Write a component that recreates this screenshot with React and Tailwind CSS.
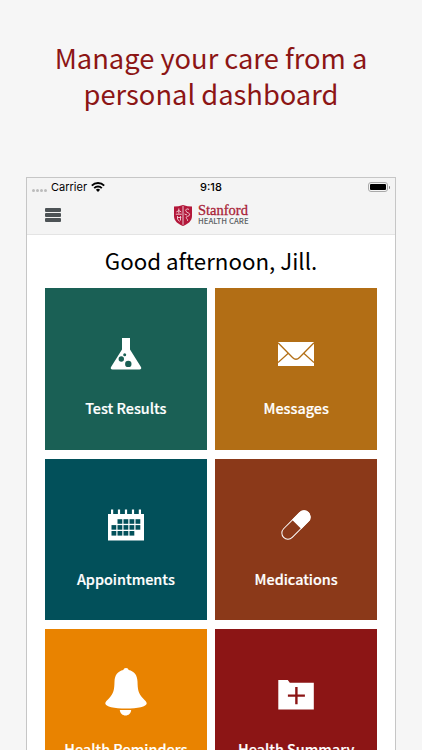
const tiles = [
  { label: 'Test Results', color: 'bg-[#1a6055]', icon: FlaskIcon },
  { label: 'Messages', color: 'bg-[#b26e15]', icon: EnvelopeIcon },
  { label: 'Appointments', color: 'bg-[#02505a]', icon: CalendarIcon },
  { label: 'Medications', color: 'bg-[#8b3919]', icon: PillIcon },
  { label: 'Health Reminders', color: 'bg-[#e98300]', icon: BellIcon },
  { label: 'Health Summary', color: 'bg-[#8c1515]', icon: FolderPlusIcon },
];

// Filled calendar days as [column, row]
const days = [
  [1, 0], [2, 0], [3, 0], [4, 0],
  [0, 1], [1, 1], [2, 1], [3, 1], [4, 1],
  [0, 2], [1, 2], [2, 2], [3, 2],
];

function FlaskIcon() {
  return (
    <svg width="32" height="32" viewBox="0 0 32 32">
      <path
        fill="#fff"
        fillRule="evenodd"
        d="M12 0h8v11.500l10.800 17.300c1 1.600.3 2.700-1.300 2.700h-27C.9 31.500.2 30.400 1.200 28.800L12 11.500ZM14.700 15.200a1.500 1.500 0 1 0 0 3 1.500 1.500 0 0 0 0-3ZM11.300 18.300a2.700 2.700 0 1 0 0 5.400 2.700 2.700 0 0 0 0-5.400ZM18.300 22.700a3.200 3.200 0 1 0 0 6.400 3.200 3.200 0 0 0 0-6.400Z"
      />
    </svg>
  );
}

function EnvelopeIcon() {
  return (
    <svg width="36" height="24" viewBox="0 0 36 24">
      <rect width="36" height="24" fill="#fff" />
      <path
        d="M0 .8 14.500 15.500Q18 19 21.500 15.500L36 .8M0 20.500 10 11.500M36 20.500 26 11.500"
        fill="none"
        stroke="#b26e15"
        strokeWidth="1.300"
      />
    </svg>
  );
}

function CalendarIcon() {
  return (
    <svg width="36" height="32" viewBox="0 0 36 32">
      <path
        fill="#fff"
        d="M0 5h3V.5h2.200V5h4.700V.5h2.200V5h4.800V.5h2.200V5h4.800V.5h2.200V5h4.700V.5h2.200V5H36v26.500H0Z"
      />
      {days.map(([col, row]) => (
        <rect
          key={`${col}-${row}`}
          x={3.5 + col * 6}
          y={10.2 + row * 5.9}
          width="4.8"
          height="4.6"
          fill="#02505a"
        />
      ))}
    </svg>
  );
}

function PillIcon() {
  return (
    <svg className="overflow-visible" width="32" height="32" viewBox="0 0 32 32">
      <g transform="rotate(-45 16 16)">
        <rect x="-1.5" y="9.9" width="35" height="12.200" rx="6.100" fill="none" stroke="#fff" strokeWidth="1" />
        <path fill="#fff" d="M17 9.400h10.400a6.600 6.600 0 0 1 0 13.200H17Z" />
      </g>
    </svg>
  );
}

function BellIcon() {
  return (
    <svg className="mb-[5px]" width="42" height="48" viewBox="0 0 42 48">
      <path
        fill="#fff"
        d="M21 0c1.600 0 2.300.8 2.700 2 5.500 1.200 8.600 5 8.800 11.500.2 8 .7 11.500 5.200 16.500 2.300 2.500 4 3.500 4 5.500 0 3-9 5-20.700 5S.3 38.500.3 35.500c0-2 1.700-3 4-5.500 4.500-5 5-8.500 5.200-16.500C9.700 7 12.800 3.200 18.300 2c.4-1.200 1.100-2 2.700-2Z"
      />
      <path fill="#fff" d="M14.800 42.100h11.400c-.3 3.400-2.700 5.500-5.700 5.500s-5.400-2.100-5.700-5.500Z" />
    </svg>
  );
}

function FolderPlusIcon() {
  return (
    <svg width="36" height="30" viewBox="0 0 36 30">
      <path fill="#fff" d="M.3 0h9.500l2 2.800h24v26.700H.3Z" />
      <path d="M18.400 7v17.200M9.900 15.600h17" stroke="#8c1515" strokeWidth="2.400" />
    </svg>
  );
}

function WifiIcon() {
  return (
    <svg width="14" height="10" viewBox="0 0 14 10">
      <g fill="none" stroke="#000" strokeWidth="1.900">
        <path d="M.8 3.600a8.800 8.800 0 0 1 12.400 0" />
        <path d="M3.200 6.100a5.400 5.400 0 0 1 7.600 0" />
      </g>
      <path d="M4.900 7.800a3 3 0 0 1 4.200 0L7 9.900Z" />
    </svg>
  );
}

function Shield() {
  return (
    <svg width="18" height="21" viewBox="0 0 18 21">
      <path
        fill="#b3173a"
        d="M0 1.500Q4.500 1.500 9 0q4.500 1.500 9 1.500V11c0 5-4 8-9 10-5-2-9-5-9-10Z"
      />
      <path d="M9 1v18.800" stroke="#f4f4f4" strokeWidth=".8" />
      <g fill="none" stroke="#f3d5db" strokeWidth=".9">
        <path d="M4.800 3.500v5M2.300 7l2.500-1.500L7.300 7M1.800 9.200h6M3.500 11v3l2 2.500M3.500 12.500h3.800M6.500 11v4.500" />
        <path d="M15 4.500c-2-1.500-4 .2-3 1.800s4 1.500 3.600 3.500-3.600 1-3.300 2.800 1.700 1.600 1.200 3.200M10.500 9l2.500 1" />
      </g>
    </svg>
  );
}

function StatusBar() {
  return (
    <div className="grid h-[18px] grid-cols-3 items-center pl-[5px] pr-[5px] font-['Inter',sans-serif] text-[11px] leading-none text-black">
      <div className="flex items-center">
        <div className="mt-[6px] flex gap-px">
          {[0, 1, 2, 3].map((dot) => (
            <span key={dot} className="size-[3px] rounded-full bg-[#bcbcbc]" />
          ))}
        </div>
        <span className="mx-[4px]">Carrier</span>
        <WifiIcon />
      </div>
      <span className="text-center font-medium">9:18</span>
      <div className="flex items-center justify-end gap-px">
        <div className="h-[10px] w-[20px] rounded-[3px] border border-[#a9a9a9] p-px">
          <div className="h-full rounded-[1px] bg-black" />
        </div>
        <span className="h-[3px] w-px rounded-r-full bg-[#888]" />
      </div>
    </div>
  );
}

function NavBar() {
  return (
    <div className="grid h-[38px] grid-cols-3 items-center">
      <button className="ml-[18px] flex w-4 flex-col gap-[1.400px]" aria-label="Menu">
        <span className="h-[4px] w-full rounded-[1px] bg-[#4d5356]" />
        <span className="h-[4px] w-full rounded-[1px] bg-[#4d5356]" />
        <span className="h-[4px] w-full rounded-[1px] bg-[#4d5356]" />
      </button>
      <div className="flex items-center justify-center gap-[6px]">
        <Shield />
        <div className="-mt-px w-[50px] whitespace-nowrap">
          <div className="font-['Liberation_Serif',serif] text-[14.500px] leading-[12px] text-[#a91e37] [-webkit-text-stroke:0.3px_#a91e37]">
            Stanford
          </div>
          <div className="font-['Noto_Sans_CJK_SC',sans-serif] text-[7.800px] font-medium leading-[9px] text-[#5b6063]">
            HEALTH CARE
          </div>
        </div>
      </div>
    </div>
  );
}

function Tile({ label, color, icon: Icon }) {
  return (
    <div className={`flex h-[161.300px] flex-col items-center ${color}`}>
      <div className="mt-[41px] flex h-[50px] items-center justify-center">
        <Icon />
      </div>
      <span className="mt-[17px] text-[14.400px] font-medium leading-[24px] text-white [-webkit-text-stroke:0.2px_#fff]">
        {label}
      </span>
    </div>
  );
}

export default function App() {
  return (
    <div className="flex h-[750px] w-[422px] flex-col overflow-hidden bg-[#f6f6f6] font-['Noto_Sans_CJK_SC',sans-serif]">
      <h1 className="h-[177px] shrink-0 pt-[39px] text-center text-[27.300px] leading-[36px] text-[#8c1515]">
        Manage your care from a
        <br />
        personal dashboard
      </h1>

      <div className="ml-[26px] w-[370px] shrink-0 border border-[#c6c6c6] bg-white">
        <div className="border-b border-[#e4e4e4] bg-[#f4f4f4]">
          <StatusBar />
          <NavBar />
        </div>
        <p className="h-[53.300px] pt-[7px] text-center text-[22.300px] leading-[36px] text-black">
          Good afternoon, Jill.
        </p>
        <div className="grid grid-cols-2 gap-x-[8.600px] gap-y-[9px] px-[18px] pb-[18px]">
          {tiles.map((tile) => (
            <Tile key={tile.label} {...tile} />
          ))}
        </div>
      </div>
    </div>
  );
}
